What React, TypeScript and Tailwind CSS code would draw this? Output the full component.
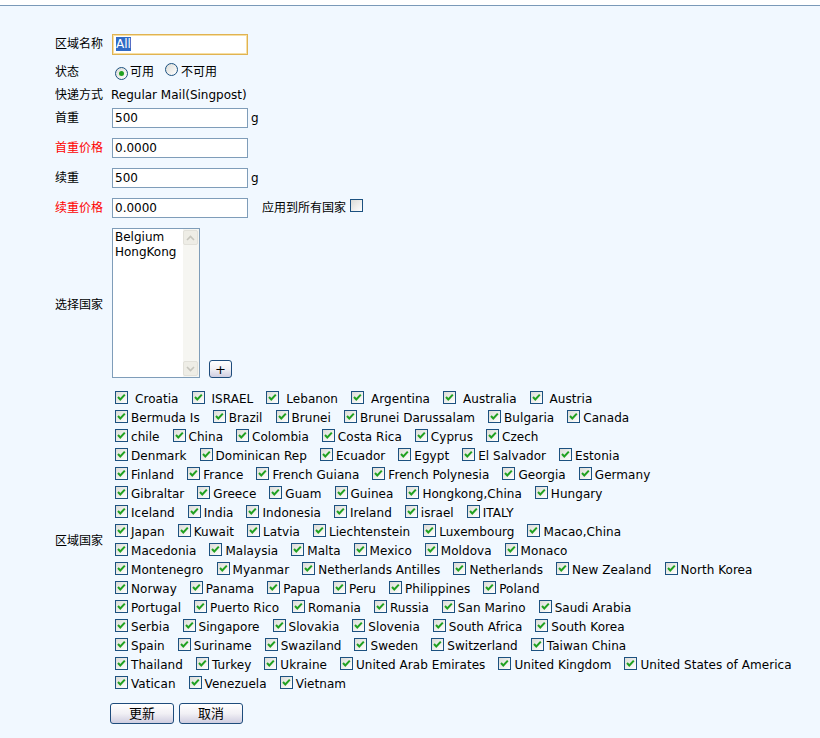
import React from "react";

const rows: string[][] = [
  ["Croatia", "ISRAEL", "Lebanon", "Argentina", "Australia", "Austria"],
  ["Bermuda Is", "Brazil", "Brunei", "Brunei Darussalam", "Bulgaria", "Canada"],
  ["chile", "China", "Colombia", "Costa Rica", "Cyprus", "Czech"],
  ["Denmark", "Dominican Rep", "Ecuador", "Egypt", "El Salvador", "Estonia"],
  ["Finland", "France", "French Guiana", "French Polynesia", "Georgia", "Germany"],
  ["Gibraltar", "Greece", "Guam", "Guinea", "Hongkong,China", "Hungary"],
  ["Iceland", "India", "Indonesia", "Ireland", "israel", "ITALY"],
  ["Japan", "Kuwait", "Latvia", "Liechtenstein", "Luxembourg", "Macao,China"],
  ["Macedonia", "Malaysia", "Malta", "Mexico", "Moldova", "Monaco"],
  ["Montenegro", "Myanmar", "Netherlands Antilles", "Netherlands", "New Zealand", "North Korea"],
  ["Norway", "Panama", "Papua", "Peru", "Philippines", "Poland"],
  ["Portugal", "Puerto Rico", "Romania", "Russia", "San Marino", "Saudi Arabia"],
  ["Serbia", "Singapore", "Slovakia", "Slovenia", "South Africa", "South Korea"],
  ["Spain", "Suriname", "Swaziland", "Sweden", "Switzerland", "Taiwan China"],
  ["Thailand", "Turkey", "Ukraine", "United Arab Emirates", "United Kingdom", "United States of America"],
  ["Vatican", "Venezuela", "Vietnam"],
];

const Box = ({ checked }: { checked?: boolean }) => (
  <span className="inline-flex w-[13px] h-[13px] shrink-0 border border-[#1c5180] bg-gradient-to-br from-[#dcdcd7] to-white items-center justify-center">
    {checked && (
      <svg width="11" height="11" viewBox="0 0 11 11">
        <polyline points="2,5 4.3,7.5 8.8,2.6" fill="none" stroke="#21a121" strokeWidth="2" />
      </svg>
    )}
  </span>
);

const Radio = ({ checked }: { checked?: boolean }) => (
  <span className="inline-flex w-[13px] h-[13px] shrink-0 rounded-full border border-[#1c5180] bg-gradient-to-br from-[#dcdcd7] to-white items-center justify-center">
    {checked && <span className="w-[5px] h-[5px] rounded-full bg-[#21a121]" />}
  </span>
);

const Field = ({ value }: { value: string }) => (
  <input
    readOnly
    defaultValue={value}
    className="ml-px w-[136px] h-[20px] border border-[#7f9db9] bg-white px-[2px] text-[12px] outline-none"
  />
);

const Row = ({ label, red, h, children }: { label: string; red?: boolean; h: string; children?: React.ReactNode }) => (
  <div className={`flex items-center ${h}`}>
    <div className={`w-[56px] shrink-0 ${red ? "text-[#ff0000]" : ""}`}>{label}</div>
    <div className="flex items-center">{children}</div>
  </div>
);

const Chevron = ({ up }: { up?: boolean }) => (
  <div className="w-[15px] h-[15px] rounded-[2px] border border-[#e2e1da] bg-[#eeede6] flex items-center justify-center">
    <svg width="9" height="6" viewBox="0 0 9 6">
      <polyline points={up ? "1,5 4.5,1.5 8,5" : "1,1 4.5,4.5 8,1"} fill="none" stroke="#c6c5bd" strokeWidth="1.6" />
    </svg>
  </div>
);

const Btn = ({ children, className = "" }: { children: React.ReactNode; className?: string }) => (
  <button className={`rounded-[3px] border border-[#1e4c7c] bg-gradient-to-b from-white via-[#f1f0f5] to-[#cfcde0] text-[13px] ${className}`}>
    {children}
  </button>
);

export default function App() {
  return (
    <div className="min-h-screen bg-[#f1f8ff] text-black text-[12px] font-['DejaVu_Sans','Noto_Sans_CJK_SC',sans-serif]">
      <div className="h-[5px] bg-white" />
      <div className="h-px bg-[#7a99b8]" />
      <div className="pl-[55px] pt-[24px]">
        <Row label="区域名称" h="h-[28px]">
          <div className="ml-px w-[136px] h-[21px] border border-[#e0b352] shadow-[inset_0_0_0_1px_#f7dfa4] bg-white px-[3px] flex items-center">
            <span className="bg-[#316ac5] text-white leading-[14px]">All</span>
          </div>
        </Row>
        <Row label="状态" h="h-[28px]">
          <span className="ml-[4px]"><Radio checked /></span>
          <span className="ml-[2px]">可用</span>
          <span className="ml-[11px]"><Radio /></span>
          <span className="ml-[3px]">不可用</span>
        </Row>
        <Row label="快递方式" h="h-[17px]">
          <span>Regular Mail(Singpost)</span>
        </Row>
        <Row label="首重" h="h-[30px]">
          <Field value="500" />
          <span className="ml-[3px]">g</span>
        </Row>
        <Row label="首重价格" red h="h-[30px]">
          <Field value="0.0000" />
        </Row>
        <Row label="续重" h="h-[30px]">
          <Field value="500" />
          <span className="ml-[3px]">g</span>
        </Row>
        <Row label="续重价格" red h="h-[30px]">
          <Field value="0.0000" />
          <span className="ml-[14px]">应用到所有国家</span>
          <span className="ml-[4px] -mt-[1px]"><Box /></span>
        </Row>

        <div className="flex items-center mt-[5px]">
          <div className="w-[56px] shrink-0 pt-[4px]">选择国家</div>
          <div className="flex items-end">
            <div className="ml-px w-[88px] h-[150px] border border-[#7f9db9] bg-white flex">
              <div className="flex-1 pl-[2px] pt-[1px] leading-[15px]">
                <div>Belgium</div>
                <div>HongKong</div>
              </div>
              <div className="w-[16px] bg-[#f6f6f2] flex flex-col justify-between py-px">
                <Chevron up />
                <Chevron />
              </div>
            </div>
            <Btn className="ml-[9px] w-[23px] h-[18px] flex items-center justify-center leading-none">+</Btn>
          </div>
        </div>

        <div className="flex items-center mt-[11px]">
          <div className="w-[56px] shrink-0">区域国家</div>
          <div className="flex flex-col whitespace-nowrap tracking-[0.05px]">
            {rows.map((r, i) => (
              <div key={i} className="flex items-center h-[19px]">
                {r.map((c) => (
                  <span key={c} className="flex items-center mr-[9px]">
                    <span className="ml-[4px] mr-[3px]"><Box checked /></span>
                    <span className={i === 0 ? "pl-[4px]" : ""}>{c}</span>
                  </span>
                ))}
              </div>
            ))}
          </div>
        </div>

        <div className="flex mt-[10px] pl-[55px] gap-[5px]">
          <Btn className="w-[64px] h-[21px]">更新</Btn>
          <Btn className="w-[64px] h-[21px]">取消</Btn>
        </div>
      </div>
    </div>
  );
}
